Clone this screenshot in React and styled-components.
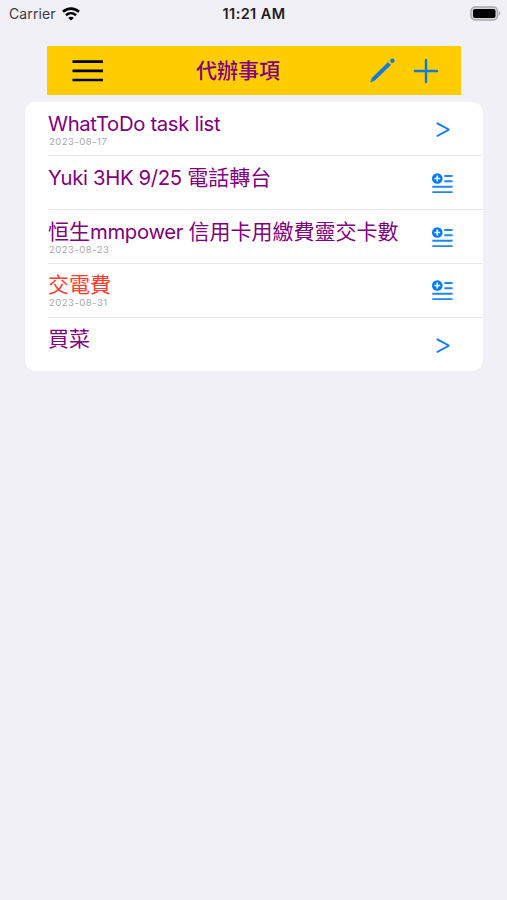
import React from 'react';
import styled, { createGlobalStyle } from 'styled-components';

const GlobalStyle = createGlobalStyle`
  * {
    box-sizing: border-box;
  }
  body {
    margin: 0;
    background: #f1f0f6;
    font-family: Inter, 'Noto Sans CJK TC', sans-serif;
  }
`;

const Screen = styled.div`
  min-height: 900px;
  background: #f1f0f6;
`;

const StatusBar = styled.div`
  display: grid;
  grid-template-columns: 1fr auto 1fr;
  align-items: center;
  height: 27px;
  padding: 0 6px 0 9px;
  color: #1c1c1e;
  font-size: 14px;
  line-height: 27px;
`;

const Carrier = styled.div`
  display: flex;
  align-items: center;
  gap: 6px;
  color: #3a3a3e;
  letter-spacing: 0.1px;
`;

const Clock = styled.div`
  padding-right: 2px;
  font-size: 14.5px;
  font-weight: 600;
  letter-spacing: 0.4px;
`;

const Battery = styled.svg`
  justify-self: end;
`;

const Toolbar = styled.header`
  display: flex;
  align-items: center;
  height: 49px;
  margin: 19px 46px 0 47px;
  padding: 0 22px 0 25px;
  background: #ffcc00;
`;

const Title = styled.h1`
  flex: 1;
  margin: 0;
  padding-left: 92px;
  color: #800080;
  font-size: 21px;
  font-weight: 500;
  line-height: 49px;
`;

const IconButton = styled.button`
  display: flex;
  padding: 0;
  margin-left: ${props => props.gap || 0}px;
  border: none;
  background: none;
  cursor: pointer;
`;

const List = styled.ul`
  margin: 7px 24px 0 25px;
  padding: 0.4px 0 0 23px;
  list-style: none;
  background: #fff;
  border-radius: 11px;
`;

const Row = styled.li`
  display: flex;
  justify-content: space-between;
  height: 53.8px;
  padding: 8.6px 30px 0 0;
  border-bottom: 1px solid #e6e6e8;
  &:last-child {
    border-bottom: none;
  }
`;

const TaskName = styled.div`
  height: 26px;
  color: ${props => (props.overdue ? '#ff3b30' : '#800080')};
  font-size: 21px;
  line-height: 26px;
  white-space: nowrap;
`;

/* Inter runs wide next to the CJK glyphs, so it is tightened */
const Latin = styled.span`
  font-size: 20.3px;
  letter-spacing: -0.34px;
`;

const TaskDate = styled.div`
  padding-left: 1px;
  color: #a9a9ab;
  font-size: 9.5px;
  line-height: 10px;
  letter-spacing: 0.5px;
`;

const Chevron = styled.div`
  width: 21px;
  padding-top: 4.5px;
  color: #007aff;
  font-size: 29px;
  font-weight: 300;
  line-height: 26px;
  display: flex;
  justify-content: center;
`;

const SubtaskIcon = styled.svg`
  margin-top: 8px;
`;

const tasks = [
  { id: 1, parts: [{ latin: 'WhatToDo task list' }], date: '2023-08-17' },
  { id: 2, parts: [{ latin: 'Yuki 3HK 9/25 ' }, { text: '電話轉台' }], subtasks: true },
  {
    id: 3,
    parts: [{ text: '恒生' }, { latin: 'mmpower ' }, { text: '信用卡用繳費靈交卡數' }],
    date: '2023-08-23',
    subtasks: true
  },
  { id: 4, parts: [{ text: '交電費' }], date: '2023-08-31', subtasks: true, overdue: true },
  { id: 5, parts: [{ text: '買菜' }] }
];

const Wifi = () => (
  <svg width="18" height="14" viewBox="0 0 18 14" fill="none" stroke="#000" strokeWidth="2.6">
    <path d="M1 4.8C5.5 0.6 12.5 0.6 17 4.8" />
    <path d="M4 8.2C7 5.5 11 5.5 14 8.2" />
    <path d="M6.2 10.9C7.8 9.4 10.2 9.4 11.8 10.9L9 13.6Z" fill="#000" stroke="none" />
  </svg>
);

const Subtasks = () => (
  <SubtaskIcon width="21" height="21" viewBox="0 0 21 21" fill="none">
    <circle cx="5.3" cy="5.5" r="5.3" fill="#007aff" />
    <path d="M5.3 2.6V8.4M2.4 5.5H8.2" stroke="#fff" strokeWidth="1.6" />
    <path d="M12.3 3H20.6M12.3 8.3H20.6M0.3 13.7H20.6M0.3 19.1H20.6" stroke="#1f86f5" strokeWidth="1.9" />
  </SubtaskIcon>
);

const TaskRow = ({ task }) => (
  <Row>
    <div>
      <TaskName overdue={task.overdue ? 1 : 0}>
        {task.parts.map((part, i) =>
          part.latin ? <Latin key={i}>{part.latin}</Latin> : <span key={i}>{part.text}</span>
        )}
      </TaskName>
      {task.date && <TaskDate>{task.date}</TaskDate>}
    </div>
    {task.subtasks ? <Subtasks /> : <Chevron>&gt;</Chevron>}
  </Row>
);

const App = () => {
  return (
    <Screen>
      <GlobalStyle />
      <StatusBar>
        <Carrier>
          Carrier
          <Wifi />
        </Carrier>
        <Clock>11:21 AM</Clock>
        <Battery width="31" height="15" viewBox="0 0 31 15">
          <rect x="1" y="1" width="26.5" height="13" rx="4" fill="#d5d5d9" stroke="#a9a9ad" strokeWidth="1.3" />
          <rect x="3" y="3" width="22.5" height="9" rx="2" fill="#000" />
          <path d="M28.7 5.3C30.8 6 30.8 9 28.7 9.7Z" fill="#a9a9ad" />
        </Battery>
      </StatusBar>
      <Toolbar>
        <IconButton aria-label="menu">
          <svg width="32" height="24" viewBox="0 0 32 24" stroke="#000" strokeWidth="2.7">
            <path d="M0.5 2.7H31M0.5 11.8H31M0.5 21H31" />
          </svg>
        </IconButton>
        <Title>代辦事項</Title>
        <IconButton aria-label="edit">
          <svg width="25" height="25" viewBox="0 0 25 25" fill="#0f7bdc">
            <path
              d="M0.8 24L2.2 19.9L18.1 4.5L20.6 7L4.7 22.3Z"
              stroke="#0f7bdc"
              strokeWidth="0.7"
              strokeLinejoin="round"
            />
            <circle cx="22.4" cy="2.7" r="2.2" />
          </svg>
        </IconButton>
        <IconButton aria-label="add" gap={18}>
          <svg width="26" height="26" viewBox="0 0 26 26" stroke="#0f7bdc" strokeWidth="2.4" strokeLinecap="round">
            <path d="M13 1.9V24.1M1.9 13H24.1" />
          </svg>
        </IconButton>
      </Toolbar>
      <List>
        {tasks.map(task => (
          <TaskRow key={task.id} task={task} />
        ))}
      </List>
    </Screen>
  );
};

export default App;
